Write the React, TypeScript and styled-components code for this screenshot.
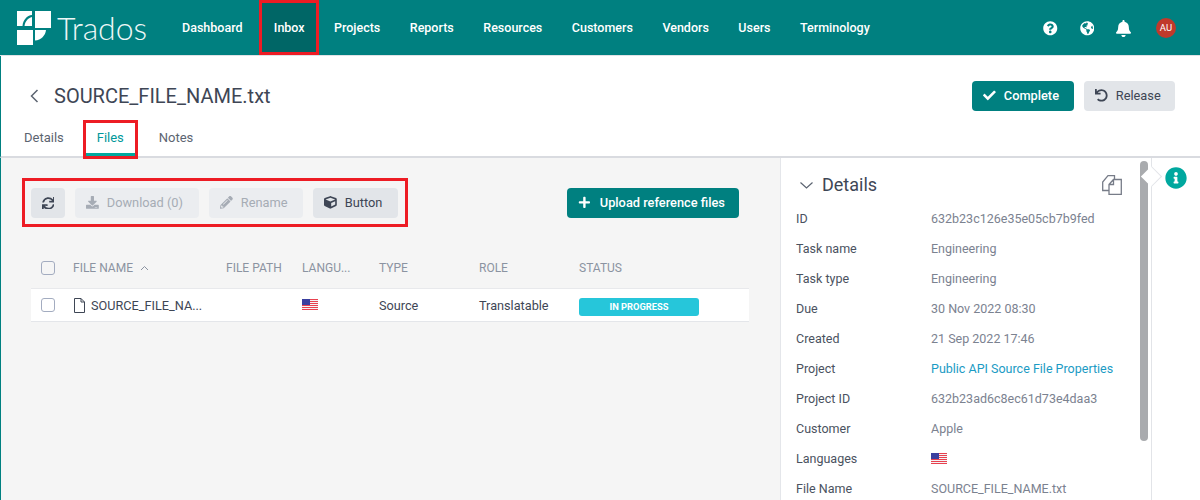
import React from "react";
import styled, { createGlobalStyle } from "styled-components";
import { FaCheck, FaUndo, FaSync, FaDownload, FaPencilAlt, FaCube, FaPlus, FaInfoCircle, FaQuestionCircle, FaGlobeAmericas, FaBell } from "react-icons/fa";

const Global = createGlobalStyle`
  html, body { margin: 0; padding: 0; }
  body { width: 1200px; height: 500px; overflow: hidden; font-family: Roboto, "Noto Sans", sans-serif; font-size: 13px; color: #3e4655; background: #fff; }
  * { box-sizing: border-box; }
`;
const Page = styled.div`width: 1200px; height: 500px; overflow: hidden; display: flex; flex-direction: column;`;
const Header = styled.header`height: 56px; flex: none; background: #008080; display: flex; align-items: flex-start; border-bottom: 1px solid #e0e2e6; color: #fff;`;
const Brand = styled.div`width: 167.250px; height: 55px; padding: 11px 0 0 17px; display: flex; gap: 6px; flex: none;`;
const BrandName = styled.span`font-family: Lato, sans-serif; font-weight: 300; font-size: 32px; line-height: 33px; color: #eef7f7;`;
const Nav = styled.nav`display: flex; height: 55px;`;
const NavItem = styled.a<{ $active?: boolean }>`
  display: flex; align-items: center; padding: 0 14.750px; font-size: 12.5px; font-weight: 500; color: #fff; height: 55px;
  ${p => p.$active ? "background:#006666; border: 3px solid #ed1c24; padding: 0; width: 60px; margin-left: 2px; justify-content: center;" : ""}
`;
const HeaderTools = styled.div`margin-left: auto; display: flex; align-items: center; height: 57px; gap: 22px; padding-right: 24px; font-size: 14.5px;`;
const BellIcon = styled(FaBell)`font-size: 17px; margin: 0 -1.500px;`;
const Avatar = styled.span`width: 20px; height: 20px; border-radius: 50%; background: #c0392b; color: #fff; font-size: 9.500px; display: flex; align-items: center; justify-content: center; margin: -2px 0 0 4px;`;
const Top = styled.section`height: 102px; flex: none; border-left: 1px solid #008080; border-bottom: 2px solid #d9dbe0; display: flex; flex-direction: column;`;
const TitleRow = styled.div`height: 64px; flex: none; display: flex; align-items: center; padding: 16px 25px 0 29px;`;
const Title = styled.h1`margin: 0 0 0 15px; font-size: 20px; font-weight: 400; line-height: 30px; color: #3e4655;`;
const Actions = styled.div`margin-left: auto; display: flex; gap: 10px;`;
const Btn = styled.button<{ $kind?: "primary" | "disabled" | "secondary"; $w?: number }>`
  height: 30px; border: 0; border-radius: 4px; padding: 0 0 1px 11px; display: inline-flex; align-items: center; gap: 8px; white-space: nowrap; flex: none;
  width: ${p => p.$w ?? 34}px;
  font-family: inherit; font-size: 12.8px; font-weight: ${p => p.$kind === "primary" ? 500 : 400};
  background: ${p => p.$kind === "primary" ? "#008080" : p.$kind === "disabled" ? "#ebedf0" : "#e2e5e9"};
  color: ${p => p.$kind === "primary" ? "#fff" : p.$kind === "disabled" ? "#a6acb5" : "#3e4655"};
`;
const IconBtn = styled(Btn)`padding: 0; justify-content: center;`;
const Tabs = styled.div`display: flex; height: 36px; padding-left: 9px; align-items: flex-start;`;
const Tab = styled.a<{ $active?: boolean }>`
  font-size: 13px; padding: 0 14px; height: 36px; line-height: 36px; color: #5c6471;
  ${p => p.$active ? "color:#00989a; margin: 0 7px 0 5px; width: 55px; height: 39px; flex: none; border: 3px solid #ed1c24; padding: 0; text-align:center; line-height: 30px; box-shadow: inset 0 -3px 0 #00a89f; position: relative; z-index: 1;" : ""}
`;
const Body = styled.main`flex: 1; min-height: 0; display: flex; border-left: 1px solid #008080;`;
const Pane = styled.section`width: 779px; flex: none; background: #f5f5f5; padding: 20px 0 0 21px;`;
const ToolRow = styled.div`width: 717px; display: flex; align-items: flex-start; justify-content: space-between;`;
const ToolGroup = styled.div`display: flex; gap: 10px; border: 3px solid #ed1c24; padding: 7px 7px 6px 6px; width: 386px;`;
const UploadBtn = styled(Btn)`margin-top: 10px; gap: 9px;`;
const Table = styled.div`margin: 22px 0 0 9px; width: 718px;`;
const Cols = styled.div`display: grid; grid-template-columns: 42px 153px 76px 77px 100px 100px 170px; align-items: center;`;
const HeadRow = styled(Cols)`height: 39px; padding-bottom: 2px; color: #8b93a1; font-size: 12px;`;
const HeadCell = styled.div`display: flex; align-items: center; gap: 7px; text-transform: uppercase; white-space: nowrap;`;
const DataRow = styled(Cols)`height: 34px; background: #fff; border-top: 1px solid #e8e9ec; border-bottom: 1px solid #e4e6ea; font-size: 12.7px;`;
const Check = styled.span`display: block; margin-left: 10px; width: 14px; height: 14px; border: 1px solid #a3acc0; border-radius: 3px; background: #fff;`;
const HeadCheck = styled(Check)`background: transparent;`;
const NameCell = styled.div`display: flex; align-items: center; gap: 5px; white-space: nowrap;`;
const Cell = styled.div`white-space: nowrap;`;
const FlagCell = styled(Cell)`margin-top: -2px;`;
const Badge = styled.span`display: block; width: 120px; height: 18px; margin-top: 3px; background: #26c6da; border-radius: 3px; color: #fff; font-size: 9.300px; font-weight: 700; line-height: 18px; text-align: center;`;
const Panel = styled.aside`width: 372px; flex: none; background: #fff; border-left: 1px solid #e4e6ea; border-right: 1px solid #e2e4e8; position: relative; padding: 0 0 0 15px;`;
const PanelHead = styled.div`height: 45px; display: flex; align-items: center; gap: 9px; padding: 9px 29px 0 4px;`;
const PanelTitle = styled.h2`margin: 0; font-size: 18px; font-weight: 400; line-height: 36px; color: #3e4655;`;
const CopyIcon = styled.svg`margin-left: auto;`;
const DetailRow = styled.div`display: grid; grid-template-columns: 135px 1fr; height: 30px; align-items: center; font-size: 12.5px;`;
const Label = styled.div`color: #4a5260;`;
const Value = styled.div<{ $link?: boolean }>`color: ${p => p.$link ? "#1b9bc4" : "#7b8290"};`;
const Scrollbar = styled.div`position: absolute; left: 359px; top: 3px; width: 8px; height: 280px; border-radius: 4px; background: #a9abae;`;
const Notch = styled.span`position: absolute; right: -8px; top: 11px; width: 15px; height: 15px; transform: rotate(45deg); background: #fff; border-top: 1px solid #e2e4e8; border-right: 1px solid #e2e4e8;`;
const Rail = styled.div`flex: 1; padding: 9px 0 0 13px; color: #00a89f; font-size: 22px; line-height: 20px; background: #fff;`;

const Flag = () => (
  <svg width="16" height="11" viewBox="0 0 16 11" style={{ display: "block" }}>
    <rect width="16" height="11" fill="#f4f4f6" />
    {[0, 2, 4, 6, 8, 10].map(y => <rect key={y} y={y} width="16" height="1" fill="#e8414f" />)}
    <rect width="8" height="6" fill="#3a3f9f" />
  </svg>
);
const FileIcon = () => (
  <svg width="13" height="15" viewBox="0 0 13 15" fill="none" stroke="#3e4655"><path d="M1.500 .5h6.500l3.500 3.500v10.500h-10zM8 .5v3.500h3.500" /></svg>
);
const Logo = () => (
  <svg width="34" height="34" viewBox="0 0 34 34" fill="#fff">
    <path d="M0 0H15V4C10 4.500 6 9 5.500 15H0Z" />
    <path d="M7.500 15C8 10.500 11 7 15 6V15Z" />
    <path d="M18 0H34V17H18Z" />
    <path d="M0 19H16V34H0Z" />
    <path d="M18 19H29C28.500 24.500 24 29 18 29.500Z" />
  </svg>
);

const rows: [string, React.ReactNode, boolean?][] = [
  ["ID", "632b23c126e35e05cb7b9fed"],
  ["Task name", "Engineering"],
  ["Task type", "Engineering"],
  ["Due", "30 Nov 2022 08:30"],
  ["Created", "21 Sep 2022 17:46"],
  ["Project", "Public API Source File Properties", true],
  ["Project ID", "632b23ad6c8ec61d73e4daa3"],
  ["Customer", "Apple"],
  ["Languages", <Flag />],
  ["File Name", "SOURCE_FILE_NAME.txt"],
];

export default function App() {
  return (
    <Page>
      <Global />
      <Header>
        <Brand><Logo /><BrandName>Trados</BrandName></Brand>
        <Nav>
          <NavItem>Dashboard</NavItem>
          <NavItem $active>Inbox</NavItem>
          {["Projects", "Reports", "Resources", "Customers", "Vendors", "Users", "Terminology"].map(n => <NavItem key={n}>{n}</NavItem>)}
        </Nav>
        <HeaderTools><FaQuestionCircle /><FaGlobeAmericas /><BellIcon /><Avatar>AU</Avatar></HeaderTools>
      </Header>
      <Top>
        <TitleRow>
          <svg width="9" height="14" viewBox="0 0 9 14" fill="none" stroke="#5c6471" strokeWidth="1.500"><path d="M7.500 1 1.500 7l6 6" /></svg>
          <Title>SOURCE_FILE_NAME.txt</Title>
          <Actions>
            <Btn $kind="primary" $w={102}><FaCheck />Complete</Btn>
            <Btn $kind="secondary" $w={91}><FaUndo />Release</Btn>
          </Actions>
        </TitleRow>
        <Tabs>
          <Tab>Details</Tab>
          <Tab $active>Files</Tab>
          <Tab>Notes</Tab>
        </Tabs>
      </Top>
      <Body>
        <Pane>
          <ToolRow>
            <ToolGroup>
              <IconBtn $kind="secondary"><FaSync /></IconBtn>
              <Btn $kind="disabled" $w={124}><FaDownload />Download (0)</Btn>
              <Btn $kind="disabled" $w={94}><FaPencilAlt />Rename</Btn>
              <Btn $kind="secondary" $w={85}><FaCube />Button</Btn>
            </ToolGroup>
            <UploadBtn $kind="primary" $w={172}><FaPlus />Upload reference files</UploadBtn>
          </ToolRow>
          <Table>
            <HeadRow>
              <HeadCheck />
              <HeadCell>File name <svg width="9" height="6" viewBox="0 0 9 6" fill="none" stroke="#8b93a1"><path d="M1 5l3.500-3.500L8 5" /></svg></HeadCell>
              <HeadCell>File path</HeadCell>
              <HeadCell>Langu...</HeadCell>
              <HeadCell>Type</HeadCell>
              <HeadCell>Role</HeadCell>
              <HeadCell>Status</HeadCell>
            </HeadRow>
            <DataRow>
              <Check />
              <NameCell><FileIcon />SOURCE_FILE_NA...</NameCell>
              <Cell />
              <FlagCell><Flag /></FlagCell>
              <Cell>Source</Cell>
              <Cell>Translatable</Cell>
              <Cell><Badge>IN PROGRESS</Badge></Cell>
            </DataRow>
          </Table>
        </Pane>
        <Panel>
          <PanelHead>
            <svg width="13" height="7" viewBox="0 0 13 7" fill="none" stroke="#5c6471" strokeWidth="1.200"><path d="M.5.5l6 5.500 6-5.500" /></svg>
            <PanelTitle>Details</PanelTitle>
            <CopyIcon width="20" height="20" viewBox="0 0 20 20" fill="none" stroke="#777c88" strokeWidth="1.300"><path d="M7 15.500H.7V7L6 .7h6.500V4M7 9.500 11.500 4.500H19.300V19.300H7zM7 9.500h4.500V4.500" /></CopyIcon>
          </PanelHead>
          {rows.map(([l, v, link]) => (
            <DetailRow key={l}><Label>{l}</Label><Value $link={link}>{v}</Value></DetailRow>
          ))}
          <Scrollbar />
          <Notch />
        </Panel>
        <Rail><FaInfoCircle /></Rail>
      </Body>
    </Page>
  );
}
